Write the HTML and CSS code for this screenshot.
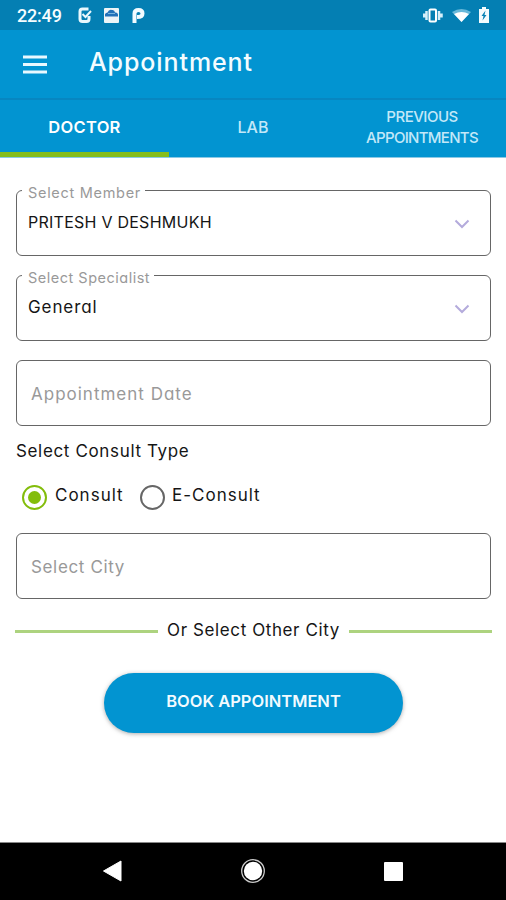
FILE: index.html
```html
<!DOCTYPE html>
<html lang="en">
<head>
<meta charset="utf-8">
<title>Appointment</title>
<link rel="stylesheet" href="styles.css">
</head>
<body>
<div class="status">
  <span class="time">22:49</span>
  <svg class="note-icons" width="70" height="18" viewBox="0 0 70 18">
    <path d="M10.500 2H4.500Q2 2 2 4.500V12Q2 14.500 4.500 14.500H8.500Q11 14.500 11 12V9" fill="none" stroke="#e9f8fd" stroke-width="3"/>
    <path d="M4.500 7L7.500 10L13 4" fill="none" stroke="#e9f8fd" stroke-width="2"/>
    <rect x="26" y="1" width="15" height="15" rx="1" fill="#edf5f7"/>
    <path d="M27 9.500V7Q28 5.500 29.500 5.500Q31 2 34 3Q36.500 2.500 37 5.500Q39.500 5 40 7.500V9.500Z" fill="#2272b8"/>
    <path d="M30 6.500H37" stroke="#78b7df"/>
    <path d="M56.500 16V6.500Q56.500 3 60.500 3Q64.500 3 64.500 6.500Q64.500 10 59 10" fill="none" stroke="#f1fbff" stroke-width="4"/>
  </svg>
  <svg class="sys-icons" width="70" height="20" viewBox="0 0 70 20">
    <path d="M1 8.500V12.500M3.500 6V15M16 6V15M18.500 8.500V12.500" stroke="#d5effa" stroke-width="2.500"/>
    <rect x="6.500" y="4.500" width="6.500" height="12" rx="1" fill="none" stroke="#fff" stroke-width="2"/>
    <path d="M29 7Q38.500 1 48 7L38.500 17Z" fill="#68b8d9"/>
    <path d="M31 9Q38.500 5 46 9L38.500 17Z" fill="#fff"/>
    <path d="M56 4H59V2H63V4H66V18H56Z" fill="#f4fbfd"/>
    <path d="M62.500 5.500L58.500 11H60.500L59.500 15.500L63.500 10H61.500Z" fill="#0781b5"/>
  </svg>
</div>
<header class="appbar">
  <svg class="menu" width="24" height="19" viewBox="0 0 24 19"><path d="M0 2H24M0 9.500H24M0 17H24" stroke="#e8f8ff" stroke-width="3"/></svg>
  <h1>Appointment</h1>
</header>
<nav class="tabs">
  <div class="tab active"><span class="doctor">DOCTOR</span></div>
  <div class="tab"><span class="lab">LAB</span></div>
  <div class="tab previous"><span>PREVIOUS</span><span class="appointments">APPOINTMENTS</span></div>
</nav>
<main>
  <fieldset class="field member">
    <legend>Select Member</legend>
    <span class="value">PRITESH V DESHMUKH</span>
    <svg class="chevron" width="16" height="10" viewBox="0 0 16 10"><path d="M1.500 1.500L8 8L14.500 1.500" fill="none" stroke="#b4abdc" stroke-width="2"/></svg>
  </fieldset>
  <fieldset class="field specialist">
    <legend>Select Specialist</legend>
    <span class="value">General</span>
    <svg class="chevron" width="16" height="10" viewBox="0 0 16 10"><path d="M1.500 1.500L8 8L14.500 1.500" fill="none" stroke="#b4abdc" stroke-width="2"/></svg>
  </fieldset>
  <div class="box date"><span>Appointment Date</span></div>
  <h2><span>Select Consult Type</span></h2>
  <div class="radios">
    <i class="radio on"></i><span class="consult">Consult</span>
    <i class="radio"></i><span class="econsult">E-Consult</span>
  </div>
  <div class="box city"><span>Select City</span></div>
  <div class="divider"><i></i><span>Or Select Other City</span><i></i></div>
  <button><span>BOOK APPOINTMENT</span></button>
</main>
<footer>
  <svg width="506" height="58" viewBox="0 0 506 58">
    <path d="M103.500 28L121 18V38Z" fill="#fff" stroke="#fff" stroke-linejoin="round"/>
    <circle cx="253" cy="28" r="11.300" fill="none" stroke="#ccc" stroke-width="1.300"/>
    <circle cx="253" cy="28" r="9.200" fill="#fff"/>
    <rect x="384" y="19" width="19" height="19" rx="1" fill="#fff"/>
  </svg>
</footer>
</body>
</html>
```
FILE: styles.css
```css
* { box-sizing: border-box; }
body {
  margin: 0;
  width: 506px;
  height: 900px;
  display: flex;
  flex-direction: column;
  background: #fff;
  color: #151515;
  font-family: Inter, "Open Sans", sans-serif;
  font-feature-settings: "cv11" 1;
  font-size: 16px;
  overflow: hidden;
}
span { white-space: nowrap; }
svg { display: block; flex: none; }
.status { height: 30px; display: flex; background: #047fb3; color: #f4fcff; padding: 0 13px 0 17px; }
.time { width: 61px; font: 500 18px/32px Roboto, sans-serif; letter-spacing: -.2px; }
.note-icons { margin-top: 7px; }
.sys-icons { margin: 5px 0 0 auto; }
.appbar { height: 68px; display: flex; background: #0294d1; padding-left: 23px; }
.menu { margin-top: 25px; }
h1 { margin: 0 0 0 42px; color: #f3fcff; font-size: 25px; font-weight: 500; line-height: 65px; letter-spacing: .9px; }
.tabs { height: 60px; display: grid; grid-template-columns: 169px 168px 169px; background: #0294d1; border-top: 2px solid #0786c1; border-bottom: 1px solid #8cc9e5; color: #c3e8f8; font-size: 16px; font-weight: 500; }
.tab { display: flex; flex-direction: column; align-items: center; justify-content: center; }
.tab.active { color: #fff; font-weight: 600; font-size: 16.500px; letter-spacing: .3px; border-bottom: 5px solid #86bd1c; padding-top: 1px; }
.lab { line-height: 20px; margin-bottom: 3px; }
.previous { font-size: 15px; line-height: 21px; padding-bottom: 3px; letter-spacing: -.5px; padding-left: 1px; }
.appointments { letter-spacing: -.7px; }
main { flex: 1; display: flex; flex-direction: column; padding: 25px 15px 0 16px; }
.field { position: relative; margin: 0; border: 1.500px solid #666; border-radius: 6px; display: flex; justify-content: space-between; align-items: flex-start; padding: 0 20px 0 10px; height: 73px; min-width: 0; }
.field.specialist { margin-top: 12px; }
legend { padding: 0 4px 0 6px; margin-left: -5px; color: #999; font-size: 14.500px; line-height: 20px; height: 14px; letter-spacing: .7px; }
.specialist legend { letter-spacing: .5px; }
.value { line-height: 22px; margin-top: 14px; letter-spacing: .25px; padding-left: 1px; }
.specialist .value { font-size: 17px; letter-spacing: .9px; }
.chevron { margin-top: 22px; }
.box { height: 66px; border: 1.500px solid #666; border-radius: 6px; color: #999; padding: 2px 0 0 14px; display: flex; align-items: center; font-size: 17px; letter-spacing: 1px; }
.date { margin-top: 19px; }
h2 { margin: 14px 0 0; font-size: 17px; font-weight: 400; line-height: 22px; letter-spacing: .65px; }
.radios { height: 30px; margin-top: 20px; padding-left: 6px; display: flex; align-items: center; font-size: 17px; letter-spacing: 1px; }
.radio { width: 25px; height: 25px; border: 2px solid #666; border-radius: 50%; flex: none; display: flex; align-items: center; justify-content: center; }
.radio.on { border: 2.500px solid #83bd0b; }
.radio.on::after { content: ""; width: 13px; height: 13px; border-radius: 50%; background: #83bd0b; }
.radios span { margin: -4px 0 0 8px; }
.radios .consult { width: 85px; }
.radios .econsult { margin-left: 7px; }
.city { margin-top: 21px; letter-spacing: .65px; }
.divider { margin: 20px -1px 0; height: 22px; display: flex; align-items: center; justify-content: space-between; font-size: 17px; letter-spacing: .6px; }
.divider i { width: 143px; height: 3px; background: #add37f; margin-top: 2px; }
button { width: 299px; height: 60px; margin: 32px 0 0 88px; border: 0; border-radius: 30px; background: #0294d1; color: #f2fbff; font: 600 16.500px Inter, sans-serif; padding: 0 0 4px; box-shadow: 0 1px 4px #7779; }
footer { height: 58px; background: #000; border-top: 1px solid #888; flex: none; }
```
